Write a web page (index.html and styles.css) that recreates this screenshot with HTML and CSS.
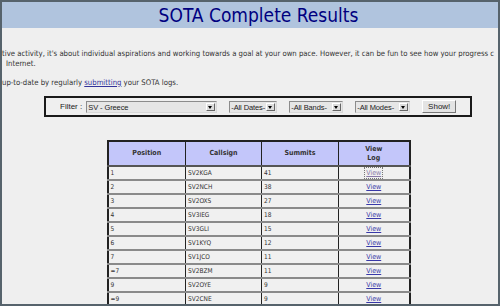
FILE: index.html
```html
<!DOCTYPE html>
<html>
<head>
  <title>SOTA Complete Results</title>
  <link rel="stylesheet" href="styles.css">
</head>
<body>

  <div class="frame">
    <div class="page">
      <h1 class="banner">SOTA Complete Results</h1>

      <p class="intro">tive activity, it's about individual aspirations and working towards a goal at your own pace. However, it can be fun to see how your progress c<br><span class="cont">Internet.</span></p>

      <p class="note">up-to-date by regularly <a href="#">submitting</a> your SOTA logs.</p>

      <div class="filter">
        <span class="label">Filter :</span>
        <div class="select wide">SV - Greece<span class="arrow"></span></div>
        <div class="select dates">-All Dates-<span class="arrow"></span></div>
        <div class="select bands">-All Bands-<span class="arrow"></span></div>
        <div class="select modes">-All Modes-<span class="arrow"></span></div>
        <div class="button">Show!</div>
      </div>

      <table class="results">
        <colgroup>
          <col style="width:78px">
          <col style="width:76px">
          <col style="width:77px">
          <col style="width:71px">
        </colgroup>
        <tr>
          <th>Position</th>
          <th>Callsign</th>
          <th>Summits</th>
          <th>View<br>Log</th>
        </tr>
        <tr><td>1</td><td>SV2KGA</td><td>41</td><td class="log"><a href="#" class="focus">View</a></td></tr>
        <tr><td>2</td><td>SV2NCH</td><td>38</td><td class="log"><a href="#">View</a></td></tr>
        <tr><td>3</td><td>SV2OXS</td><td>27</td><td class="log"><a href="#">View</a></td></tr>
        <tr><td>4</td><td>SV3IEG</td><td>18</td><td class="log"><a href="#">View</a></td></tr>
        <tr><td>5</td><td>SV3GLI</td><td>15</td><td class="log"><a href="#">View</a></td></tr>
        <tr><td>6</td><td>SV1KYQ</td><td>12</td><td class="log"><a href="#">View</a></td></tr>
        <tr><td>7</td><td>SV1JCO</td><td>11</td><td class="log"><a href="#">View</a></td></tr>
        <tr><td>=7</td><td>SV2BZM</td><td>11</td><td class="log"><a href="#">View</a></td></tr>
        <tr><td>9</td><td>SV2OYE</td><td>9</td><td class="log"><a href="#">View</a></td></tr>
        <tr><td>=9</td><td>SV2CNE</td><td>9</td><td class="log"><a href="#">View</a></td></tr>
      </table>
    </div>
  </div>

</body>
</html>
```

FILE: styles.css
```css
body {
  margin: 0;
  background: #efefef;
}

.frame {
  width: 500px;
  height: 306px;
  box-sizing: border-box;
  border: 2px solid #56636c;
  overflow: hidden;
  background: #efefef;
}

.page {
  width: 513px;
  font-family: "DejaVu Sans Condensed", "DejaVu Sans", sans-serif;
  color: #333;
}

.banner {
  margin: 0;
  height: 26px;
  line-height: 27px;
  background: #b0c4de;
  color: #000080;
  font-size: 19px;
  font-weight: normal;
  text-align: center;
}

.intro, .note {
  font-size: 7.7px;
  line-height: 10px;
  white-space: nowrap;
}

.intro {
  margin: 21px 0 0;
}

.cont {
  padding-left: 4px;
}

.note {
  margin: 9px 0 0;
}

.note a {
  color: #33339a;
}

.filter {
  margin: 8px 0 0 42px;
  width: 428px;
  height: 21px;
  box-sizing: border-box;
  border: 2px solid #1a1a1a;
  display: flex;
  align-items: center;
  gap: 12px;
  padding-left: 14px;
  font-family: "Liberation Sans", Arial, sans-serif;
  font-size: 7.5px;
  color: #222;
}

.label {
  margin-right: -8px;
  font-size: 8px;
}

.select {
  position: relative;
  height: 12px;
  line-height: 11px;
  box-sizing: border-box;
  border: 1px solid #8c8c8c;
  border-right-color: #d8d8d8;
  border-bottom-color: #d8d8d8;
  background: #e6e6e6;
  padding-left: 1px;
  white-space: nowrap;
  overflow: hidden;
  letter-spacing: -0.1px;
}

.wide { width: 131px; }
.dates { width: 48px; }
.bands { width: 54px; }
.modes { width: 55px; }

.arrow {
  position: absolute;
  right: 1px;
  top: 1px;
  width: 9px;
  height: 8px;
  box-sizing: border-box;
  background: #dcdcdc;
  border: 1px solid #fff;
  border-right-color: #666;
  border-bottom-color: #666;
}

.arrow::after {
  content: "";
  position: absolute;
  left: 1px;
  top: 2px;
  border-left: 2.5px solid transparent;
  border-right: 2.5px solid transparent;
  border-top: 3px solid #000;
}

.button {
  width: 34px;
  height: 13px;
  line-height: 11px;
  box-sizing: border-box;
  text-align: center;
  background: #e4e4e4;
  border: 1px solid #fff;
  border-right-color: #777;
  border-bottom-color: #777;
  font-size: 8px;
}

.results {
  margin: 23px auto 0;
  width: 302px;
  table-layout: fixed;
  border-collapse: collapse;
  border: 2px solid #222;
  font-size: 6.5px;
  color: #333;
}

.results th {
  height: 23px;
  padding: 0;
  background: #c3c6fa;
  font-size: 7px;
  font-weight: bold;
  line-height: 9px;
  border-left: 1px solid #222;
  border-bottom: 2px solid #555;
}

.results td {
  height: 12px;
  padding: 0 0 0 2px;
  background: #f0f0f0;
  border-left: 1px solid #222;
  border-bottom: 2px solid #8a8a8a;
}

.results td.log {
  text-align: center;
  padding: 0;
}

.log a {
  color: #3838a8;
  font-size: 7px;
}

.log a.focus {
  outline: 1px dotted #777;
  outline-offset: 1px;
  color: #8a7aa8;
}
```
